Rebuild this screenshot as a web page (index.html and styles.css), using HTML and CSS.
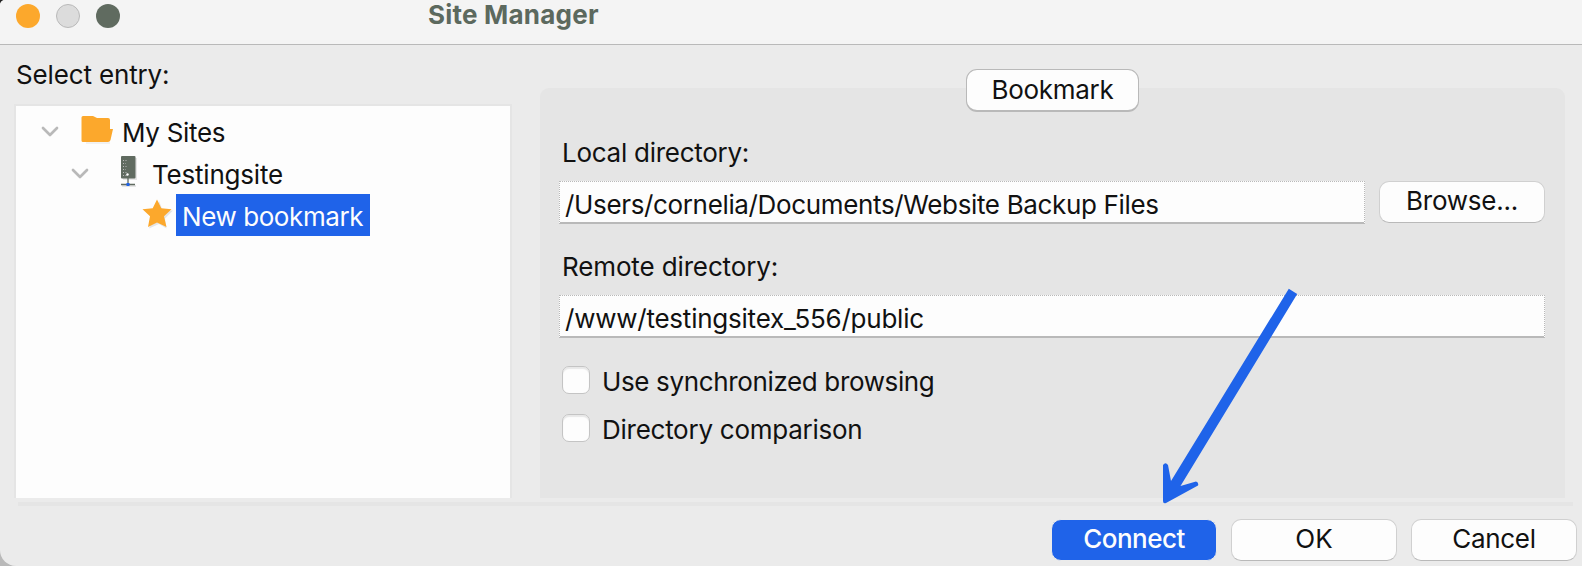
FILE: index.html
```
<!DOCTYPE html>
<html lang="en">
<head>
<meta charset="utf-8">
<title>Site Manager</title>
<link rel="stylesheet" href="styles.css">
</head>
<body>
<div class="window">
  <header class="titlebar">
    <div class="lights"><i class="light close"></i><i class="light minimize"></i><i class="light zoom"></i></div>
    <h1 class="title"><span class="t-title">Site Manager</span></h1>
  </header>
  <main class="content">
    <section class="sidebar">
      <div class="sidebar-label"><span class="t-select">Select entry:</span></div>
      <div class="tree">
        <div class="row row-root">
          <svg class="chevron" width="18" height="12" viewBox="0 0 18 12"><path d="M2 2l7 7 7-7"/></svg>
          <svg class="folder" width="34" height="30" viewBox="0 0 34 30"><path class="shade" d="M5 27.5h24v1H5z"/><path class="gold" d="M2 1h10l4 2h11q2 0 2 2v9h3l-2.500 11q-.6 2-2.500 2H2q-1.500 0-1.500-1.500V2.500Q.5 1 2 1z"/></svg>
          <span class="t-sites">My Sites</span>
        </div>
        <div class="row row-site">
          <svg class="chevron" width="18" height="12" viewBox="0 0 18 12"><path d="M2 2l7 7 7-7"/></svg>
          <svg class="server" width="18" height="32" viewBox="0 0 18 32"><path class="shade" d="M3 2h14v22H3zM2 29h14v2H2z"/><rect class="slate" x="1" y="0" width="14.500" height="22.500" rx="1"/><path class="specks" d="M3 4.500h4M3 7.500h3M3 10.500h5M3 13.500h3M3 16.500h4M3 19.500h4"/><path class="wire" d="M8 22v6M1 28.500h14"/><circle cx="7.500" cy="18.500" r="1.200" fill="#fff"/><rect x="6.500" y="27" width="3" height="3" fill="#1f63e9"/></svg>
          <span class="t-testing">Testingsite</span>
        </div>
        <div class="row row-bookmark">
          <svg class="star" width="32" height="30" viewBox="0 0 32 30"><path class="shade" d="M17 2l4 10 10-.5-8 8 1.500 10L17 25l-10 4.500z"/><path class="gold" d="M15 .5l4.300 8.800 10.200 1-7.500 7 2.500 10.700L15 23.500 6 28l2-10.700L.5 10.300l10.200-1z"/></svg>
          <span class="selected"><span class="t-new">New bookmark</span></span>
        </div>
      </div>
    </section>
    <section class="panel">
      <div class="tab"><span class="t-bookmark">Bookmark</span></div>
      <div class="label label-local"><span class="t-local">Local directory:</span></div>
      <div class="field-row">
        <div class="field"><span class="t-users">/Users/cornelia/Documents/Website Backup Files</span></div>
        <div class="button browse"><span class="t-browse">Browse...</span></div>
      </div>
      <div class="label label-remote"><span class="t-remote">Remote directory:</span></div>
      <div class="field-row">
        <div class="field"><span class="t-www">/www/testingsitex_556/public</span></div>
      </div>
      <div class="checks">
        <div class="check"><i class="box"></i><span class="t-sync">Use synchronized browsing</span></div>
        <div class="check"><i class="box"></i><span class="t-compare">Directory comparison</span></div>
      </div>
    </section>
  </main>
  <hr class="divider">
  <footer class="actions">
    <div class="button primary"><span class="t-connect">Connect</span></div>
    <div class="button"><span class="t-ok">OK</span></div>
    <div class="button"><span class="t-cancel">Cancel</span></div>
  </footer>
  <svg class="arrow" width="140" height="220" viewBox="1160 286 140 220"><path d="M1288.800 288.700L1297.200 294 1180.500 486 1196 481.500Q1199 482.500 1198 485.500L1166 503Q1163 504 1163 501V465Q1165.500 461.500 1168 465L1171 481z"/></svg>
</div>
</body>
</html>
```
FILE: styles.css
```
* { box-sizing: border-box; }
body {
  margin: 0;
  background: linear-gradient(#222 50%, #b9b9b9 50%);
  color: #111;
  font: 26px/42px Inter, "Liberation Sans", sans-serif;
  white-space: nowrap;
}
.window {
  position: relative;
  display: flex;
  flex-direction: column;
  width: 1582px;
  height: 566px;
  overflow: hidden;
  background: #ebebeb;
  border-radius: 5px 0 0 16px;
}
.titlebar {
  display: flex;
  flex: none;
  height: 45px;
  background: #f4f4f4;
  border-bottom: 1px solid #b9b9b9;
}
.lights { display: flex; gap: 16px; padding: 4px 0 0 16px; width: 428px; }
.light { width: 24px; height: 24px; border-radius: 50%; }
.close { background: #fca82c; }
.minimize { background: #dcdcdc; border: 1px solid #b9b9b9; }
.zoom { background: #606b60; }
.title { margin: 0; font-size: 26px; font-weight: 700; line-height: 30px; color: #5c695e; }
.content { display: flex; flex: none; height: 453px; }
.sidebar { width: 512px; padding: 9px 0 0 14px; }
.sidebar-label { padding-left: 2px; height: 50px; }
.tree {
  height: 394px;
  padding-top: 6px;
  background: #fdfdfd;
  border: 2px solid #e5e5e5;
  border-bottom: 0;
}
.row { display: flex; height: 42px; }
.chevron { flex: none; margin-top: 14px; fill: none; stroke: #b9b9b9; stroke-width: 2.7; stroke-linecap: round; stroke-linejoin: round; }
.row-root { padding-left: 25px; }
.row-site { padding-left: 55px; }
.row-bookmark { padding-left: 126px; }
.folder { margin: 3px 7px 0 22px; }
.server { margin: 2px 14px 0 31px; }
.star { margin: 3px 2px 0 0; }
.gold { fill: #fca82c; }
.shade { fill: #e5e5e5; }
.slate { fill: #606b60; }
.specks { stroke: #b9b9b9; stroke-dasharray: 1 1.5; }
.wire { fill: none; stroke: #606b60; stroke-width: 1.3; }
.selected { width: 194px; height: 42px; margin-top: -2px; padding-left: 6px; line-height: 46px; background: #1f63e9; color: #fdfdfd; }
.panel {
  width: 1025px;
  height: 410px;
  margin: 43px 0 0 28px;
  padding: 0 20px 0 19px;
  background: #e5e5e5;
  border-radius: 9px 9px 0 0;
}
.tab {
  width: 173px;
  height: 43px;
  margin: -19px 0 0 407px;
  line-height: 39px;
  text-align: center;
  background: #fdfdfd;
  border: 1px solid #b9b9b9;
  border-bottom-width: 2px;
  border-radius: 11px;
}
.label { padding-left: 3px; }
.label-local { margin-top: 20px; }
.label-remote { margin-top: 22px; }
.field-row { display: flex; gap: 14px; margin-top: 7px; }
.field {
  flex: 1;
  height: 43px;
  padding-left: 5px;
  line-height: 45px;
  background: #fdfdfd;
  border: 1px dotted #b9b9b9;
  border-bottom: 2px solid #b9b9b9;
}
.checks { display: flex; flex-direction: column; gap: 6px; padding: 22px 0 0 3px; }
.check { display: flex; gap: 12px; height: 42px; line-height: 44px; }
.box {
  width: 28px;
  height: 28px;
  margin-top: 6px;
  background: #fdfdfd;
  border: 1px solid #c4c4c4;
  border-radius: 7px;
  box-shadow: inset 0 2px 1px #e8e8e8;
}
.button {
  width: 166px;
  height: 42px;
  line-height: 38px;
  text-align: center;
  background: #fdfdfd;
  border: 1px solid #d0d0d0;
  border-bottom-color: #b9b9b9;
  border-radius: 10px;
}
.browse { line-height: 38px; }
.divider { flex: none; width: 1555px; height: 4px; margin: 4px 0 0 18px; border: 0; background: #e5e5e5; }
.actions { display: flex; gap: 14px; padding: 13px 5px 0 0; justify-content: flex-end; }
.primary { background: #1f63e9; border-color: #ebebeb; color: #fdfdfd; font-weight: 500; }
.arrow { position: absolute; left: 1160px; top: 286px; fill: #1f63e9; }

/* Per-label tracking */
.t-title { letter-spacing: .22px; }
.t-select { letter-spacing: -.15px; }
.t-sites { letter-spacing: -.3px; }
.t-testing { letter-spacing: -.2px; }
.t-new { letter-spacing: -.42px; }
.t-local { letter-spacing: -.27px; }
.t-users { letter-spacing: -.35px; }
.t-remote { letter-spacing: -.13px; }
.t-www { letter-spacing: -.23px; }
.t-sync { letter-spacing: -.36px; }
.t-compare { letter-spacing: -.26px; }
.t-bookmark { letter-spacing: -.3px; }
.t-browse { letter-spacing: -.25px; }
.t-connect { letter-spacing: -.5px; }
.t-cancel { letter-spacing: -.3px; }
```
